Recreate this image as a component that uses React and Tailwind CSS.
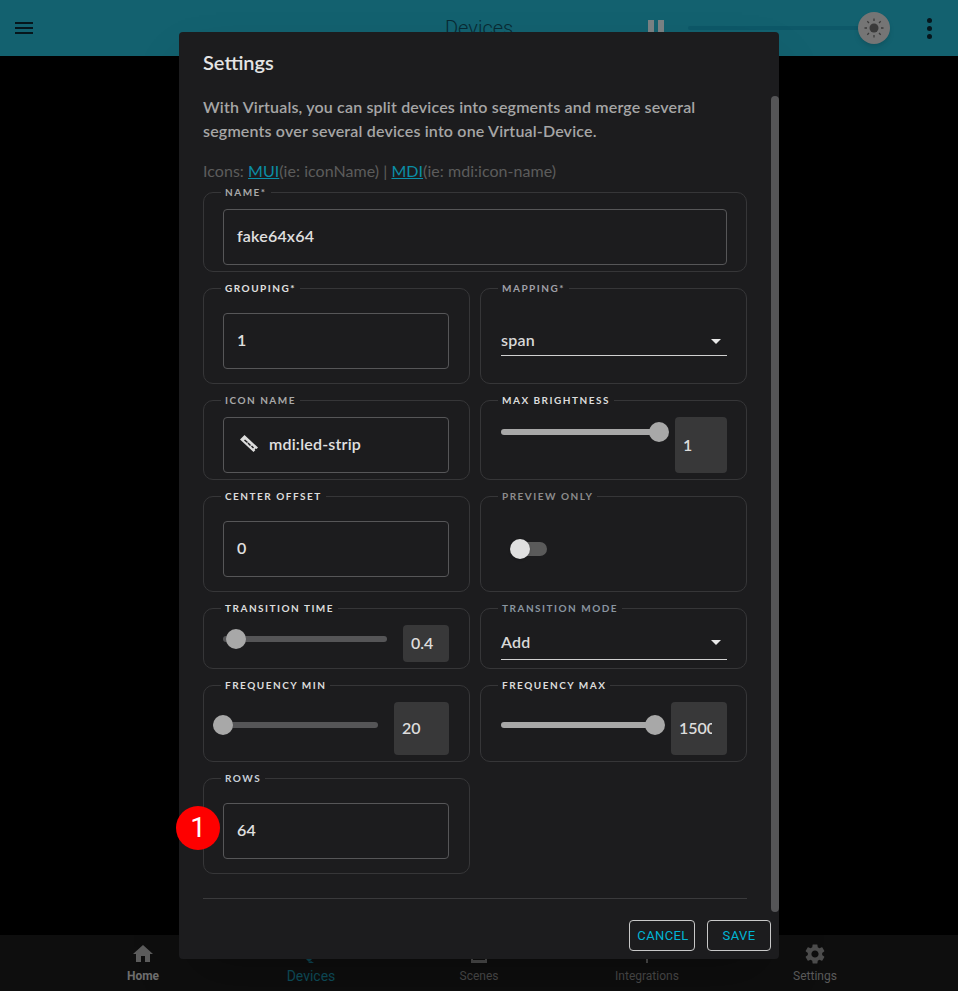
const sans = "font-['Lato','Open_Sans',sans-serif]";

function Group({ label, labelColor = 'text-[#c8c8c8]', className = '', children }) {
  return (
    <div className={`relative rounded-[10px] border border-[#363638] ${className}`}>
      <span className={`absolute left-[17px] -top-[8px] bg-[#1c1c1e] px-1 text-[10px] leading-[14px] font-bold uppercase tracking-[0.15em] whitespace-nowrap ${labelColor}`}>
        {label}
      </span>
      {children}
    </div>
  );
}

function Input({ value, icon, className = '' }) {
  return (
    <div className={`flex h-14 items-center rounded border border-[#565658] px-[13px] pb-[2px] text-base font-semibold tracking-[0.2px] text-[#e0e0e0] ${className}`}>
      {icon}
      {value}
    </div>
  );
}

function Select({ value, className = '' }) {
  return (
    <div className={`flex items-center justify-between border-b border-[#d0d0d0] text-base font-semibold tracking-[0.2px] text-[#d8d8d8] ${className}`}>
      <span className="-mt-[2px]">{value}</span>
      <svg viewBox="0 0 10 5" className="mr-[6px] h-[5px] w-[10px] fill-[#e8e8e8]"><path d="M0 0h10L5 5z" /></svg>
    </div>
  );
}

function ValueBox({ value, className = '' }) {
  return (
    <div className={`flex-none overflow-hidden rounded bg-[#383839] pl-2 text-base font-semibold text-[#dcdcdc] ${className}`}>
      <div className="overflow-hidden whitespace-nowrap">{value}</div>
    </div>
  );
}

function LedStrip() {
  return (
    <svg viewBox="0 0 20 20" className="mr-[10px] ml-[2px] h-5 w-5 fill-[#dcdcdc]">
      <path fillRule="evenodd" d="M5.500 1 19 13.500 17.500 15l-1-.6-.8.8.6 1L14.500 18 1 5.500zM6 5.500 5 6.500 8 9l1-1zM9.500 8.500l-1 1 2.500 2.500 1-1zM13 11.500l-1 1 2 2 1-1z" />
    </svg>
  );
}

function Sun() {
  return (
    <svg viewBox="0 0 24 24" className="h-6 w-6 fill-[#3a3a3a] stroke-[#3a3a3a]">
      <circle cx="12" cy="12" r="4.500" stroke="none" />
      <path strokeWidth="1.300" d="M12 2.500v2.500M12 19v2.500M2.500 12H5M19 12h2.500M5.300 5.300 7 7M17 17l1.700 1.700M5.300 18.700 7 17M17 7l1.700-1.700" />
    </svg>
  );
}

const navItems = [
  { label: 'Home', color: 'text-xs text-[#6e6e6e] font-bold', fill: 'fill-[#5c5c5c]', d: 'M10 20v-6h4v6h5v-8h3L12 3 2 12h3v8z' },
  { label: 'Devices', color: 'text-sm text-[#0e4f5d]', fill: 'fill-[#0e4653]', d: 'M4 4h10l6 6-10 10-6-6zM9 21l3-2 3 2z' },
  { label: 'Scenes', color: 'text-xs text-[#4a4a4a]', fill: 'fill-[#4a4a4a]', d: 'M4 4h16v17H4zM6 6v12h12V6z' },
  { label: 'Integrations', color: 'text-xs text-[#4a4a4a]', fill: 'fill-[#4a4a4a]', d: 'M9 3h6v12h-2v6h-2v-6H9z' },
  { label: 'Settings', color: 'text-xs text-[#5a5a5a]', fill: 'fill-[#4c4c4c]', d: 'M19.140 12.940c.04-.3.06-.61.06-.94 0-.32-.02-.64-.07-.94l2.030-1.580c.18-.14.23-.41.12-.61l-1.920-3.320c-.12-.22-.37-.29-.59-.22l-2.390.96c-.5-.38-1.030-.7-1.620-.94l-.36-2.540c-.04-.24-.24-.41-.48-.41h-3.840c-.24 0-.43.17-.47.41l-.36 2.540c-.59.24-1.130.57-1.620.94l-2.390-.96c-.22-.08-.47 0-.59.22L2.740 8.870c-.12.21-.08.47.12.61l2.030 1.580c-.05.3-.09.63-.09.94s.02.64.07.94l-2.030 1.580c-.18.14-.23.41-.12.61l1.920 3.320c.12.22.37.29.59.22l2.390-.96c.5.38 1.030.7 1.620.94l.36 2.540c.05.24.24.41.48.41h3.840c.24 0 .44-.17.47-.41l.36-2.540c.59-.24 1.130-.56 1.620-.94l2.390.96c.22.08.47 0 .59-.22l1.920-3.320c.12-.22.07-.47-.12-.61l-2.010-1.580zM12 15.600c-1.980 0-3.600-1.620-3.600-3.600s1.620-3.600 3.600-3.600 3.600 1.620 3.600 3.600-1.620 3.600-3.600 3.600z' },
];

export default function App() {
  return (
    <div className={`relative flex h-[991px] w-[958px] flex-col overflow-hidden bg-black ${sans}`}>
      {/* app bar behind the dialog */}
      <header className="flex h-14 flex-none items-center bg-[#13616f]">
        <div className="flex w-12 justify-center">
          <svg viewBox="0 0 24 24" className="h-6 w-6 fill-[#06161c]"><path d="M3 18h18v-2H3zm0-5h18v-2H3zm0-7v2h18V6z" /></svg>
        </div>
        <div className="flex-1 pl-[397px] font-['Roboto',sans-serif] text-xl font-light text-[#092a33]">Devices</div>
        <div className="mr-6 flex gap-1">
          <span className="h-4 w-[6px] bg-[#7a8284]" />
          <span className="h-4 w-[6px] bg-[#7a8284]" />
        </div>
        <div className="h-[4px] w-[172px] rounded bg-[#0d5868]" />
        <div className="-ml-[2px] flex h-8 w-8 items-center justify-center rounded-full bg-[#757575] shadow-md">
          <Sun />
        </div>
        <div className="ml-[37px] mr-[26px] flex flex-col gap-[3px]">
          <span className="h-[5px] w-[5px] rounded-full bg-[#06161c]" />
          <span className="h-[5px] w-[5px] rounded-full bg-[#06161c]" />
          <span className="h-[5px] w-[5px] rounded-full bg-[#06161c]" />
        </div>
      </header>

      <main className="flex-1" />

      {/* bottom navigation */}
      <nav className="flex h-14 flex-none justify-center bg-[#0e0e0e] font-['Roboto',sans-serif]">
        {navItems.map(item => (
          <div key={item.label} className="flex w-[168px] flex-col items-center pt-[7px]">
            <svg viewBox="0 0 24 24" className={`h-6 w-6 ${item.fill}`}><path fillRule="evenodd" d={item.d} /></svg>
            <span className={`leading-5 ${item.color}`}>{item.label}</span>
          </div>
        ))}
      </nav>

      {/* dialog */}
      <div className="absolute left-[179px] top-8 flex h-[927px] w-[600px] flex-col rounded bg-[#1c1c1e] shadow-2xl">
        <h2 className="px-6 pt-[14px] pb-[18px] text-xl leading-8 font-semibold text-[#e4e4e4]">Settings</h2>
        <div className="flex min-h-0 flex-1">
          <div className="flex-1 overflow-hidden px-6">
            <p className="-mt-px text-base leading-6 font-semibold tracking-[0.17px] text-[#a6a6a6]">
              With Virtuals, you can split devices into segments and merge several segments over several devices into one Virtual-Device.
            </p>
            <p className="mt-4 text-base leading-6 tracking-[0.04px] text-[#5c5c5c]">
              Icons: <span className="text-[#0b8ea6] underline">MUI</span>(ie: iconName) | <span className="text-[#0b8ea6] underline">MDI</span>(ie: mdi:icon-name)
            </p>

            <div className="mt-[9px] grid grid-cols-2 gap-x-[10px] gap-y-4">
              <Group label="Name*" labelColor="text-[#a8a8a8]" className="col-span-2 h-20 px-[19px] pt-4">
                <Input value="fake64x64" />
              </Group>

              <Group label="Grouping*" labelColor="text-[#e0e0e0]" className="h-24 pl-[19px] pr-5 pt-6">
                <Input value="1" />
              </Group>
              <Group label="Mapping*" labelColor="text-[#a0a0a8]" className="h-24 pl-5 pr-[19px] pt-[38px]">
                <Select value="span" className="h-[29px]" />
              </Group>

              <Group label="Icon Name" labelColor="text-[#a8a8a8]" className="h-20 pl-[19px] pr-5 pt-4">
                <Input value="mdi:led-strip" icon={<LedStrip />} />
              </Group>
              <Group label="Max Brightness" labelColor="text-[#dcdcdc]" className="flex h-20 gap-4 pl-5 pr-[19px] pt-4">
                <div className="relative mt-3 h-[6px] flex-1 rounded-full bg-[#a8a8a8]">
                  <span className="absolute -right-[10px] -top-[7px] h-5 w-5 rounded-full bg-[#a8a8a8]" />
                </div>
                <ValueBox value="1" className="h-14 w-[52px] pt-4 leading-6" />
              </Group>

              <Group label="Center Offset" labelColor="text-[#dcdcdc]" className="h-24 pl-[19px] pr-5 pt-6">
                <Input value="0" />
              </Group>
              <Group label="Preview Only" labelColor="text-[#8c8c8c]" className="h-24 pl-[30px] pt-[45px]">
                <div className="relative h-[14px] w-[36px] rounded-full bg-[#5a5a5a]">
                  <span className="absolute -left-[1px] -top-[3px] h-5 w-5 rounded-full bg-[#e0e0e0] shadow" />
                </div>
              </Group>

              <Group label="Transition Time" labelColor="text-[#dcdcdc]" className="flex h-[61px] gap-4 pl-[19px] pr-[20px] pt-4">
                <div className="relative mt-[11px] h-[6px] flex-1 rounded-full bg-[#555557]">
                  <span className="absolute left-[3px] -top-[7px] h-5 w-5 rounded-full bg-[#a8a8a8]" />
                </div>
                <ValueBox value="0.4" className="h-[37px] w-[46px] pt-[6px] leading-6" />
              </Group>
              <Group label="Transition Mode" labelColor="text-[#8a96a0]" className="h-[61px] pl-5 pr-[19px] pt-[17px]">
                <Select value="Add" className="h-[34px]" />
              </Group>

              <Group label="Frequency Min" labelColor="text-[#dcdcdc]" className="flex h-[77px] gap-4 pl-[9px] pr-[20px] pt-4">
                <div className="relative mt-[20px] h-[6px] flex-1 rounded-full bg-[#555557]">
                  <span className="absolute left-0 -top-[7px] h-5 w-5 rounded-full bg-[#a8a8a8]" />
                </div>
                <ValueBox value="20" className="h-[53px] w-[55px] pt-[14px] leading-6" />
              </Group>
              <Group label="Frequency Max" labelColor="text-[#dcdcdc]" className="flex h-[77px] gap-4 pl-5 pr-[19px] pt-4">
                <div className="relative mt-[20px] h-[6px] flex-1 rounded-full bg-[#a8a8a8]">
                  <span className="absolute -right-[10px] -top-[7px] h-5 w-5 rounded-full bg-[#a8a8a8]" />
                </div>
                <ValueBox value="15000" className="h-[53px] w-[56px] pr-[15px] pt-[14px] leading-6" />
              </Group>

              <Group label="Rows" labelColor="text-[#c8d0d8]" className="h-24 pl-[19px] pr-5 pt-6">
                <Input value="64" />
              </Group>
            </div>

            <hr className="mt-6 border-[#3a3a3c]" />
          </div>
          <div className="w-2 flex-none rounded-full bg-[#555557]" />
        </div>
        <div className="flex h-[47px] flex-none items-start justify-end gap-3 pr-2 pt-2 font-['Roboto',sans-serif] text-[13px] tracking-[0.03em] text-[#00b5d5]">
          <button className="flex h-[31px] w-[66px] items-center justify-center rounded border border-[#c8c8c8] pl-[2px]">CANCEL</button>
          <button className="flex h-[31px] w-[64px] items-center justify-center rounded border border-[#c8c8c8]">SAVE</button>
        </div>
      </div>

      {/* step marker */}
      <div className="absolute left-[176px] top-[806px] flex h-11 w-11 items-center justify-center rounded-full bg-[#fe0000] font-['Roboto',sans-serif] text-[28px] font-normal text-white">
        1
      </div>
    </div>
  );
}
